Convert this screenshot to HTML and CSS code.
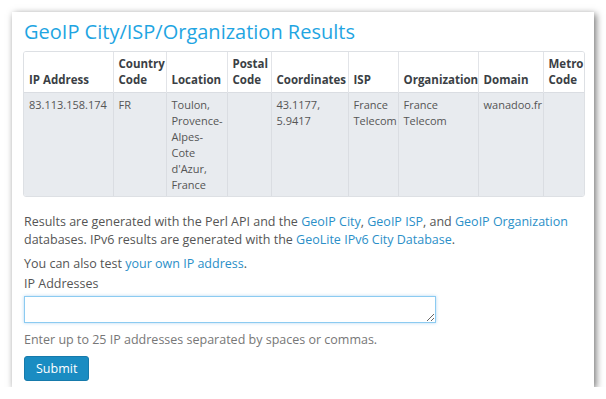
FILE: index.html
```html
<!DOCTYPE html>
<html lang="en">
<head>
  <meta charset="UTF-8">
  <title>GeoIP City/ISP/Organization Results</title>
  <link rel="stylesheet" href="styles.css">
</head>
<body>

  <div class="panel">
    <h1>GeoIP City/ISP/Organization Results</h1>

    <div class="table-wrap">
      <table class="results">
        <thead>
          <tr>
            <th class="c-ip">IP Address</th>
            <th class="c-cc">Country Code</th>
            <th class="c-loc">Location</th>
            <th class="c-postal">Postal Code</th>
            <th class="c-coord">Coordinates</th>
            <th class="c-isp">ISP</th>
            <th class="c-org">Organization</th>
            <th class="c-dom">Domain</th>
            <th class="c-metro">Metro Code</th>
          </tr>
        </thead>
        <tbody>
          <tr>
            <td>83.113.158.174</td>
            <td>FR</td>
            <td>Toulon,<br>Provence-<br>Alpes-<br>Cote<br>d'Azur,<br>France</td>
            <td></td>
            <td>43.1177,<br>5.9417</td>
            <td>France<br>Telecom</td>
            <td>France<br>Telecom</td>
            <td>wanadoo.fr</td>
            <td></td>
          </tr>
        </tbody>
      </table>
    </div>

    <p class="note">Results are generated with the Perl API and the <a href="#">GeoIP City</a>, <a href="#">GeoIP ISP</a>, and <a href="#">GeoIP Organization</a> databases. IPv6 results are generated with the <a href="#">GeoLite IPv6 City Database</a>.</p>

    <p class="note">You can also test <a href="#">your own IP address</a>.</p>

    <form class="lookup">
      <label for="addresses">IP Addresses</label>
      <textarea id="addresses" rows="1"></textarea>
      <p class="hint">Enter up to 25 IP addresses separated by spaces or commas.</p>
      <button type="submit">Submit</button>
    </form>
  </div>

</body>
</html>
```

FILE: styles.css
```css
body {
  margin: 0;
  background: #fff;
  font-family: "Open Sans", Arial, sans-serif;
  color: #555;
}
.panel {
  margin: 12px 0 0 12px;
  width: 582px;
  height: 375px;
  box-sizing: border-box;
  padding: 6px 9px 0 11px;
  background: #fff;
  box-shadow: 2px 2px 7px rgba(0, 0, 0, 0.55);
}
h1 {
  margin: 0 0 5px 1px;
  font-size: 20px;
  font-weight: normal;
  line-height: 28px;
  color: #1fa5e2;
}
.table-wrap {
  border: 1px solid #dde0e4;
  border-radius: 3px;
  overflow: hidden;
}
.results {
  width: 100%;
  table-layout: fixed;
  border-collapse: collapse;
  font-size: 11px;
  line-height: 16px;
}
.results th,
.results td {
  box-sizing: border-box;
  padding: 4px 4px 4px 5px;
  text-align: left;
}
.results th {
  vertical-align: bottom;
  font-weight: bold;
  font-size: 11.5px;
  color: #3b3f45;
  background: #fff;
  border-left: 1px solid #e2e4e8;
}
.results td {
  vertical-align: top;
  padding-bottom: 3px;
  background: #e8ebef;
  border-left: 1px solid #dadde2;
  border-top: 1px solid #dadde2;
  color: #555;
}
.results th:first-child,
.results td:first-child { border-left: none; }
.c-ip { width: 89px; }
.c-cc { width: 53px; }
.c-loc { width: 61px; }
.c-postal { width: 44px; }
.c-coord { width: 77px; }
.c-isp { width: 50px; }
.c-org { width: 80px; }
.c-dom { width: 65px; }
.note {
  margin: 16px 0 0 1px;
  font-size: 12.5px;
  line-height: 18px;
}
.note + .note { margin-top: 6px; }
a {
  color: #2b8fc8;
  text-decoration: none;
}
.lookup { margin: 2px 0 0 1px; }
.lookup label {
  display: block;
  font-size: 12.5px;
  line-height: 18px;
}
.lookup textarea {
  display: block;
  margin-top: 3px;
  width: 412px;
  height: 27px;
  box-sizing: border-box;
  border: 1px solid #8ccbf1;
  box-shadow: 0 0 3px rgba(102, 175, 233, 0.5);
  resize: vertical;
}
.hint {
  margin: 8px 0 0;
  font-size: 12.5px;
  line-height: 18px;
  color: #777;
}
button {
  margin-top: 7px;
  padding: 0 11px;
  height: 25px;
  background: #1a8cc2;
  border: 1px solid #167aab;
  border-radius: 3px;
  color: #fff;
  font-family: inherit;
  font-size: 12.5px;
  cursor: pointer;
}
```
